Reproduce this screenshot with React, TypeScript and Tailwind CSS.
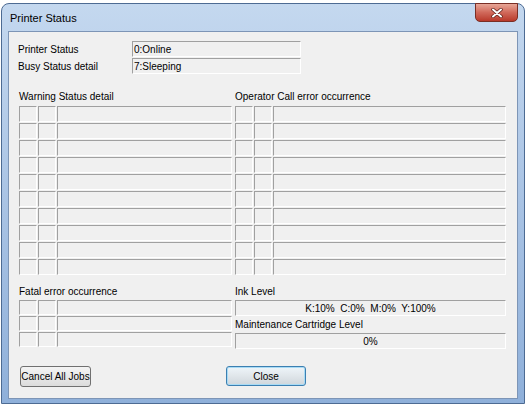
import React from 'react';

const font = { fontFamily: '"Liberation Sans", Arial, sans-serif' };

// sunken static box like a Win32 SS_SUNKEN control
const sunken = 'border-t border-l border-[#a0a0a0] border-b border-r border-b-white border-r-white bg-[#f0f0f0]';

const GridRow = ({ h }: { h: string }) => (
  <div className={`flex gap-[1px] ${h}`}>
    <div className={`w-[18px] ${sunken}`} />
    <div className={`w-[18px] ${sunken}`} />
    <div className={`flex-1 ${sunken}`} />
  </div>
);

const StatusGrid = ({ rows, h }: { rows: number; h: string }) => (
  <div className="flex flex-col gap-[1px]">
    {Array.from({ length: rows }).map((_, i) => (
      <GridRow key={i} h={h} />
    ))}
  </div>
);

const Label = ({ children }: { children: React.ReactNode }) => (
  <div className="h-[13px] leading-[13px] text-[10px] text-black whitespace-nowrap">{children}</div>
);

export default function App() {
  return (
    <div className="w-[526px] h-[404px] bg-white pt-[3px] pl-[1px] overflow-hidden" style={font}>
      <div className="w-[524px] h-[401px] rounded-t-[8px] border border-[#4d6b93] bg-linear-to-b from-[#c4d8ef] via-[#a9c3e4] to-[#8fb0da] flex flex-col px-[6px] pb-[4px]">
        {/* title bar */}
        <div className="h-[27px] flex items-start justify-between shrink-0">
          <div className="mt-[8px] ml-[2px] text-[11px] leading-[13px] text-black">Printer Status</div>
          <div className="-mt-px w-[43px] h-[19px] rounded-b-[5px] border border-[#7a2e25] bg-linear-to-b from-[#e7a697] via-[#d0685a] to-[#b8382a] flex items-center justify-center">
            <svg width="12" height="10" viewBox="0 0 12 10">
              <path d="M2 1.5 L10 8.5 M10 1.5 L2 8.5" stroke="#5a1d16" strokeWidth="3.4" strokeLinecap="round" />
              <path d="M2 1.5 L10 8.5 M10 1.5 L2 8.5" stroke="#ffffff" strokeWidth="2" strokeLinecap="round" />
            </svg>
          </div>
        </div>

        {/* client area */}
        <div className="flex-1 bg-[#f0f0f0] border border-[#7d95b6] pt-[9px] pl-[9px] pr-[10px] flex flex-col text-[10px]">
          <div className="grid grid-cols-[114px_169px] gap-y-[1px]">
            <div className="h-[16px] flex items-center">Printer Status</div>
            <div className={`h-[16px] ${sunken} flex items-center pl-[1px]`}>0:Online</div>
            <div className="h-[16px] flex items-center">Busy Status detail</div>
            <div className={`h-[16px] ${sunken} flex items-center pl-[1px]`}>7:Sleeping</div>
          </div>

          <div className="mt-[16px] pl-[1px] flex gap-[3px]">
            <div className="w-[213px] flex flex-col">
              <Label>Warning Status detail</Label>
              <div className="mt-[3px]">
                <StatusGrid rows={10} h="h-[16px]" />
              </div>
              <div className="mt-[10px]">
                <Label>Fatal error occurrence</Label>
              </div>
              <div className="mt-[2px]">
                <StatusGrid rows={3} h="h-[15px]" />
              </div>
            </div>

            <div className="w-[271px] flex flex-col">
              <Label>Operator Call error occurrence</Label>
              <div className="mt-[3px]">
                <StatusGrid rows={10} h="h-[16px]" />
              </div>
              <div className="mt-[10px]">
                <Label>Ink Level</Label>
              </div>
              <div className={`mt-[2px] h-[16px] ${sunken} flex items-center justify-center whitespace-pre`}>
                K:10%  C:0%  M:0%  Y:100%
              </div>
              <div className="mt-[2px]">
                <Label>Maintenance Cartridge Level</Label>
              </div>
              <div className={`mt-[2px] h-[16px] ${sunken} flex items-center justify-center`}>0%</div>
            </div>
          </div>

          <div className="mt-[17px] pl-[2px] flex items-start gap-[135px]">
            <button className="w-[71px] h-[21px] px-0 rounded-[3px] border border-[#707070] bg-linear-to-b from-[#f4f4f4] to-[#dcdcdc] text-[10px] whitespace-nowrap text-black">
              Cancel All Jobs
            </button>
            <button className="w-[80px] h-[20px] rounded-[3px] border border-[#3c7fb1] bg-linear-to-b from-[#eef5fa] via-[#e0e6ea] to-[#cfd6dc] shadow-[inset_0_0_0_1px_#a8dbf5] text-[10px] text-black">
              Close
            </button>
          </div>
        </div>
      </div>
    </div>
  );
}
